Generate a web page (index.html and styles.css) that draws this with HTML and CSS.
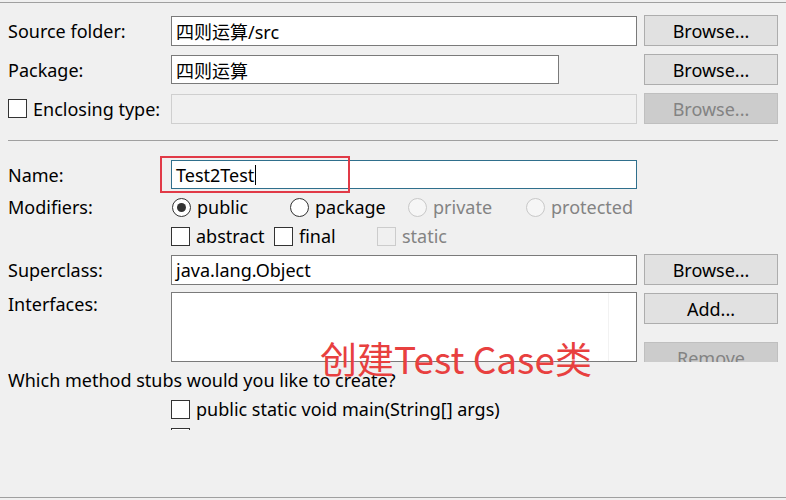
FILE: index.html
```html
<!DOCTYPE html>
<html lang="zh">
<head>
    <meta charset="UTF-8">
    <title>New JUnit Test Case</title>
    <link rel="stylesheet" href="styles.css">
</head>
<body>
    <div class="frame">
        <div class="row first">
            <label class="lbl">Source folder:</label>
            <div class="field">四则运算/src</div>
            <button class="btn">Browse...</button>
        </div>
        <div class="row">
            <label class="lbl">Package:</label>
            <div class="field short">四则运算</div>
            <button class="btn">Browse...</button>
        </div>
        <div class="row">
            <label class="lbl check-lbl"><span class="box"></span>Enclosing type:</label>
            <div class="field disabled"></div>
            <button class="btn disabled">Browse...</button>
        </div>

        <div class="sep"></div>

        <div class="row name-row">
            <label class="lbl">Name:</label>
            <div class="field focus"><span class="caret">Test2Test</span></div>
            <div class="mark"></div>
        </div>
        <div class="row opt-row">
            <label class="lbl">Modifiers:</label>
            <div class="opts radios">
                <span class="opt"><span class="radio on"></span>public</span>
                <span class="opt"><span class="radio"></span>package</span>
                <span class="opt off"><span class="radio"></span>private</span>
                <span class="opt off"><span class="radio"></span>protected</span>
            </div>
        </div>
        <div class="row opt-row checks">
            <span class="lbl"></span>
            <div class="opts cbs">
                <span class="opt"><span class="box"></span>abstract</span>
                <span class="opt"><span class="box"></span>final</span>
                <span class="opt off"><span class="box"></span>static</span>
            </div>
        </div>
        <div class="row super-row">
            <label class="lbl">Superclass:</label>
            <div class="field">java.lang.Object</div>
            <button class="btn">Browse...</button>
        </div>
        <div class="row list-row">
            <label class="lbl">Interfaces:</label>
            <div class="field list"><span class="list-edge"></span></div>
            <div class="btn-col">
                <button class="btn">Add...</button>
                <button class="btn disabled">Remove</button>
            </div>
        </div>

        <p class="question">Which method stubs would you like to create?</p>
        <div class="stubs">
            <div class="stub"><span class="box"></span>public static void main(String[] args)</div>
            <div class="stub"><span class="box"></span></div>
        </div>

        <div class="note">创建Test Case类</div>
    </div>
</body>
</html>
```

FILE: styles.css
```css
body {
    margin: 0;
    background: #f0f0f0;
    font-family: "Noto Sans", "Noto Sans CJK SC", sans-serif;
    font-size: 18px;
    color: #000;
}
.frame {
    position: relative;
    margin-top: 2px;
    height: 494px;
    padding: 0 8px;
    border-top: 1px solid #a0a0a0;
    border-bottom: 1px solid #a0a0a0;
    overflow: hidden;
}
.row {
    display: flex;
    align-items: center;
    height: 31px;
    margin-top: 8px;
}
.row.first {
    margin-top: 12px;
}
.lbl {
    width: 163px;
    flex-shrink: 0;
    white-space: nowrap;
    display: flex;
    align-items: center;
}
.field {
    box-sizing: border-box;
    width: 466px;
    height: 30px;
    padding: 0 4px;
    background: #fff;
    border: 1px solid #7a7a7a;
    display: flex;
    align-items: center;
    white-space: nowrap;
}
.field.short {
    width: 388px;
    height: 29px;
    margin-right: 78px;
}
.field.disabled {
    background: #f0f0f0;
    border-color: #cfcfcf;
}
.field.focus {
    height: 29px;
    border-color: #2f6f8c;
}
.caret {
    border-right: 1px solid #000;
    padding-right: 1px;
    line-height: 20px;
}
.btn {
    box-sizing: border-box;
    width: 134px;
    height: 31px;
    margin-left: 7px;
    padding: 0;
    background: #e1e1e1;
    border: 1px solid #adadad;
    font: inherit;
    color: #000;
}
.btn.disabled {
    background: #cccccc;
    border-color: #bfbfbf;
    color: #838383;
}
.box {
    box-sizing: border-box;
    width: 19px;
    height: 19px;
    margin-right: 6px;
    background: #fff;
    border: 1px solid #333;
    flex-shrink: 0;
}
.sep {
    height: 1px;
    margin-top: 16px;
    background: #a0a0a0;
}
.name-row {
    position: relative;
    height: 29px;
    margin-top: 19px;
}
.mark {
    position: absolute;
    left: 152px;
    top: -4px;
    width: 186px;
    height: 33px;
    border: 2px solid #e13a47;
}
.opt-row {
    height: 22px;
    margin-top: 7px;
}
.checks {
    margin-top: 7px;
}
.opts {
    display: flex;
}
.opt {
    display: flex;
    align-items: center;
    white-space: nowrap;
}
.radios .opt {
    width: 118px;
}
.cbs .opt {
    width: 103px;
}
.opt.off {
    color: #838383;
}
.opt.off .box {
    background: #f0f0f0;
    border-color: #cccccc;
}
.radio {
    box-sizing: border-box;
    width: 19px;
    height: 19px;
    margin: 0 6px 0 1px;
    border: 1px solid #333;
    border-radius: 50%;
    background: #fff;
    display: flex;
    align-items: center;
    justify-content: center;
}
.radio.on::after {
    content: "";
    width: 9px;
    height: 9px;
    border-radius: 50%;
    background: #333;
}
.opt.off .radio {
    border-color: #c8c8c8;
    background: #f6f6f6;
}
.super-row {
    margin-top: 7px;
}
.list-row {
    height: 70px;
    margin-top: 7px;
    align-items: flex-start;
    overflow: hidden;
}
.list-row .lbl {
    height: 24px;
}
.field.list {
    height: 70px;
    position: relative;
}
.list-edge {
    position: absolute;
    right: 27px;
    top: 0;
    bottom: 0;
    width: 1px;
    background: #f2f2f2;
}
.btn-col {
    display: flex;
    flex-direction: column;
    gap: 18px;
    padding-top: 1px;
}
.question {
    margin: 8px 0 0;
    line-height: 20px;
}
.stubs {
    height: 30px;
    margin-top: 10px;
    padding-left: 163px;
    overflow: hidden;
}
.stub {
    display: flex;
    align-items: center;
    height: 19px;
    line-height: 19px;
    margin-bottom: 9px;
}
.note {
    position: absolute;
    left: 320px;
    top: 332px;
    font-family: "Noto Sans CJK SC", sans-serif;
    font-size: 37px;
    color: #e8403f;
    line-height: 46px;
    white-space: nowrap;
}
```
